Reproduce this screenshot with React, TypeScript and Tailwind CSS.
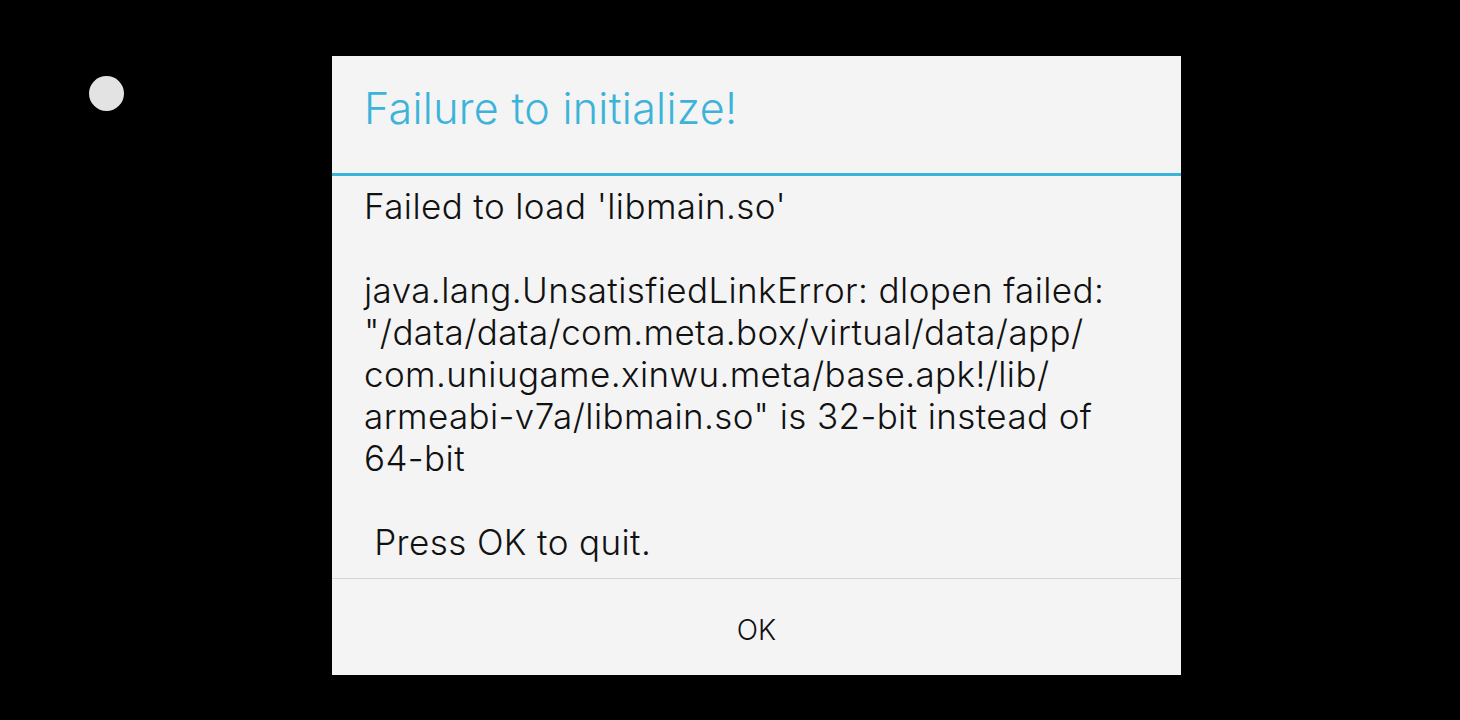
export default function App() {
  const lines = [
    "Failed to load 'libmain.so'",
    "\u00a0",
    "java.lang.UnsatisfiedLinkError: dlopen failed:",
    "\"/data/data/com.meta.box/virtual/data/app/",
    "com.uniugame.xinwu.meta/base.apk!/lib/",
    "armeabi-v7a/libmain.so\" is 32-bit instead of",
    "64-bit",
    "\u00a0",
    " Press OK to quit.",
  ];
  return (
    <div className="w-[1460px] h-[720px] bg-black relative overflow-hidden" style={{ fontFamily: "Inter, 'Noto Sans', sans-serif" }}>
      <div className="absolute left-[89px] top-[76px] w-[35px] h-[35px] rounded-full bg-[#e3e3e3]" />
      <div className="absolute left-[332px] top-[56px] w-[849px] h-[619px] bg-[#f4f4f5] flex flex-col">
        <div className="h-[117px] flex items-center px-[32px] pb-[12px]">
          <span className="text-[43px] text-[#3cb3d9] leading-none font-light tracking-[0.3px]">Failure to initialize!</span>
        </div>
        <div className="h-[3px] bg-[#3cb3d9]" />
        <div className="px-[32px] pt-[9px] flex-1">
          {lines.map((l, i) => (
            <div key={i} className="text-[35px] leading-[42px] text-[#111] font-light tracking-[0.4px] whitespace-pre">{l}</div>
          ))}
        </div>
        <div className="h-px bg-[#d6d6d6]" />
        <div className="h-[96px] flex items-center justify-center pt-[5px]">
          <span className="text-[28px] text-[#111] font-light">OK</span>
        </div>
      </div>
    </div>
  );
}
